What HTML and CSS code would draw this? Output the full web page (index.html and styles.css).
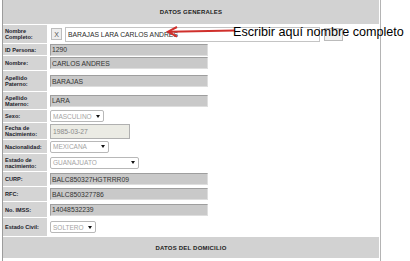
FILE: index.html
```html
<!DOCTYPE html>
<html lang="es">
<head>
<meta charset="utf-8">
<title>Datos generales</title>
<link rel="stylesheet" href="styles.css">
</head>
<body>
<div class="page">
  <div class="form">
    <div class="hdr">DATOS GENERALES</div>

    <div class="lbl">Nombre<br>Completo:</div>
    <div class="val">
      <button class="xbtn" type="button">X</button>
      <input class="full" type="text" value="BARAJAS LARA CARLOS ANDRES">
      <span class="minibtn"></span>
    </div>

    <div class="lbl">ID Persona:</div>
    <div class="val"><input class="txt" type="text" value="1290" readonly></div>

    <div class="lbl">Nombre:</div>
    <div class="val"><input class="txt" type="text" value="CARLOS ANDRES" readonly></div>

    <div class="lbl">Apellido<br>Paterno:</div>
    <div class="val"><input class="txt" type="text" value="BARAJAS" readonly></div>

    <div class="lbl">Apellido<br>Materno:</div>
    <div class="val"><input class="txt" type="text" value="LARA" readonly></div>

    <div class="lbl">Sexo:</div>
    <div class="val"><div class="sel w-sexo"><span>MASCULINO</span><i class="arr"></i></div></div>

    <div class="lbl">Fecha de<br>Nacimiento:</div>
    <div class="val"><input class="fecha" type="text" value="1985-03-27" disabled></div>

    <div class="lbl">Nacionalidad:</div>
    <div class="val"><div class="sel w-nac"><span>MEXICANA</span><i class="arr"></i></div></div>

    <div class="lbl">Estado de<br>nacimiento:</div>
    <div class="val"><div class="sel w-edo"><span>GUANAJUATO</span><i class="arr"></i></div></div>

    <div class="lbl">CURP:</div>
    <div class="val"><input class="txt" type="text" value="BALC850327HGTRRR09" readonly></div>

    <div class="lbl">RFC:</div>
    <div class="val"><input class="txt" type="text" value="BALC850327786" readonly></div>

    <div class="lbl">No. IMSS:</div>
    <div class="val"><input class="txt" type="text" value="14048532239" readonly></div>

    <div class="lbl">Estado Civil:</div>
    <div class="val"><div class="sel w-civil"><span>SOLTERO</span><i class="arr"></i></div></div>

    <div class="hdr">DATOS DEL DOMICILIO</div>
  </div>

  <svg class="arrow" width="72" height="20" viewBox="0 0 72 20">
    <line x1="5" y1="9.7" x2="71" y2="8.4" stroke="#d0302c" stroke-width="2"/>
    <polyline points="13,5 4,9.7 13,14.6" fill="none" stroke="#d0302c" stroke-width="2" stroke-linejoin="miter"/>
  </svg>
  <span class="note">Escribir aquí nombre completo</span>
</div>
</body>
</html>
```

FILE: styles.css
```css
html, body {
  margin: 0;
  padding: 0;
  background: #ffffff;
}

.page {
  position: relative;
  width: 410px;
  height: 261px;
  overflow: hidden;
  font-family: "Liberation Sans", Arial, sans-serif;
}

.form {
  margin-left: 2px;
  width: 376px;
  padding-right: 1px;
  border-left: 1px solid #9c9c9c;
  border-right: 1px solid #b4b4b4;
  display: grid;
  grid-template-columns: 44px 1fr;
  grid-template-rows: 24px 18px 11px 14px 20px 17px 12px 16px 13px 17px 14px 14px 15px 18px 21px;
  column-gap: 2px;
  row-gap: 1px;
  padding-bottom: 4px;
}

.hdr {
  grid-column: 1 / -1;
  background: #d2d2d2;
  display: flex;
  align-items: center;
  justify-content: center;
  font-weight: bold;
  font-size: 6px;
  letter-spacing: 0.2px;
  color: #222222;
}

.lbl {
  background: #d4d4d4;
  display: flex;
  align-items: center;
  padding-left: 2px;
  font-weight: bold;
  font-size: 5.6px;
  line-height: 6px;
  color: #1c1c2a;
}

.val {
  display: flex;
  align-items: center;
  padding-left: 1px;
}

.txt {
  box-sizing: border-box;
  width: 158px;
  height: 12px;
  margin: 0;
  padding: 0 1px;
  background: #c9c9c9;
  border: 1px solid;
  border-color: #9e9e9e #dedede #dedede #9e9e9e;
  font-family: "Liberation Sans", Arial, sans-serif;
  font-size: 6.8px;
  color: #333333;
  outline: none;
}

.xbtn {
  box-sizing: border-box;
  width: 11px;
  height: 12px;
  margin: 0 3px 0 1px;
  padding: 0;
  background: #eeeeee;
  border: 1px solid #bdbdbd;
  font-family: "Liberation Sans", Arial, sans-serif;
  font-size: 7px;
  color: #555555;
}

.full {
  box-sizing: border-box;
  width: 255px;
  height: 15px;
  margin: 0;
  padding: 0 2px;
  background: #ffffff;
  border: 1px solid #c4c4c4;
  font-family: "Liberation Sans", Arial, sans-serif;
  font-size: 6.8px;
  color: #2a2a2a;
  outline: none;
}

.minibtn {
  box-sizing: border-box;
  width: 19px;
  height: 13px;
  margin-left: 4px;
  background: #f0f0f0;
  border: 1px solid #bbbbbb;
}

.fecha {
  box-sizing: border-box;
  width: 80px;
  height: 15px;
  margin: 0;
  padding: 0 2px;
  background: #ebebe4;
  border: 1px solid #b0b0b0;
  font-family: "Liberation Sans", Arial, sans-serif;
  font-size: 6.8px;
  color: #8a8a8a;
}

.sel {
  box-sizing: border-box;
  height: 12px;
  display: flex;
  align-items: center;
  justify-content: space-between;
  padding: 0 3px 0 2px;
  background: #ffffff;
  border: 1px solid #b8b8b8;
  border-radius: 2px;
  font-family: "Liberation Sans", Arial, sans-serif;
  font-size: 6.5px;
  color: #a4a4a4;
}

.w-sexo { width: 54px; }
.w-nac { width: 59px; }
.w-edo { width: 89px; }
.w-civil { width: 46px; }

.arr {
  width: 0;
  height: 0;
  border-left: 2px solid transparent;
  border-right: 2px solid transparent;
  border-top: 3px solid #111111;
}

.arrow {
  position: absolute;
  left: 164px;
  top: 22px;
}

.note {
  position: absolute;
  left: 233px;
  top: 25px;
  font-family: "Liberation Sans", Arial, sans-serif;
  font-size: 12.6px;
  line-height: 15px;
  color: #000000;
  white-space: nowrap;
}
```
